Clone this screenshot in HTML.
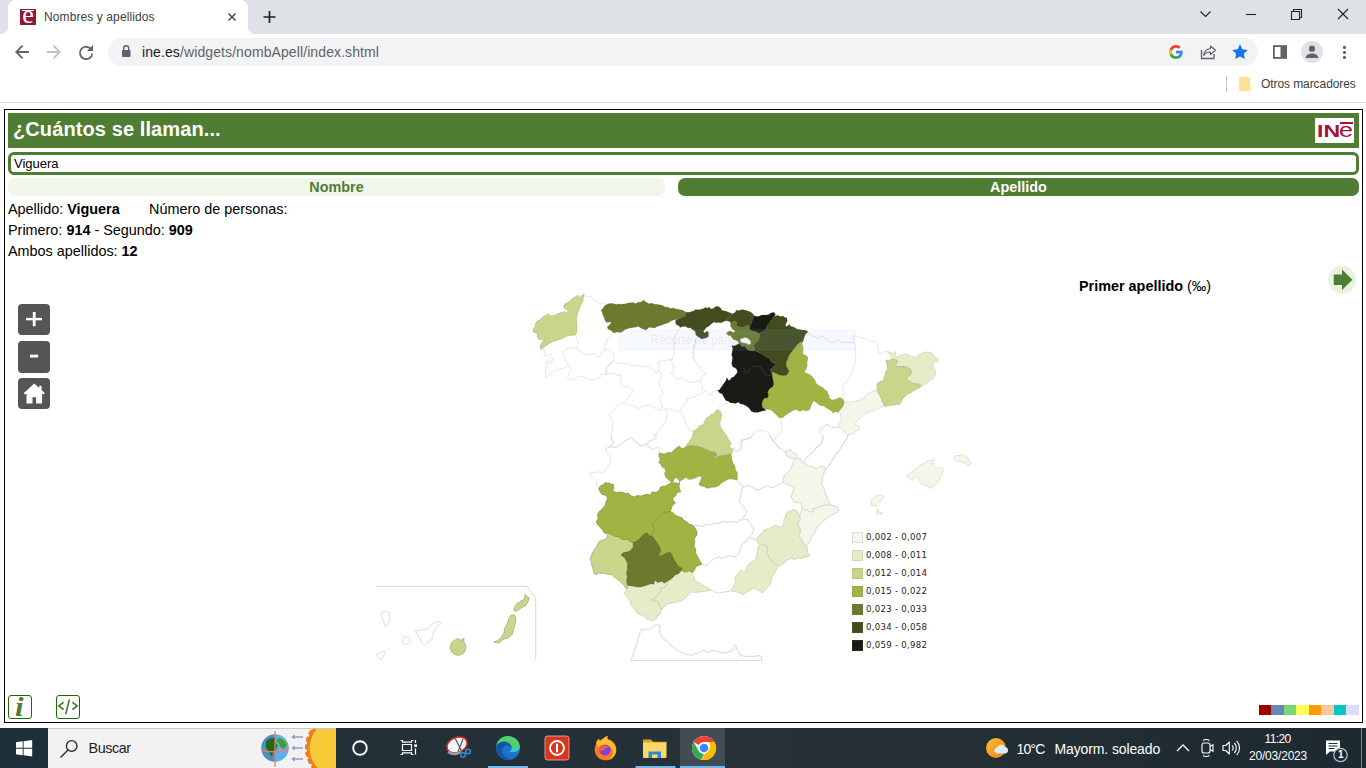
<!DOCTYPE html>
<html lang="es">
<head>
<meta charset="utf-8">
<title>Nombres y apellidos</title>
<style>
*{box-sizing:border-box;margin:0;padding:0}
html,body{width:1366px;height:768px;overflow:hidden;background:#fff}
body{position:relative;font-family:"Liberation Sans",sans-serif;color:#000}
.abs{position:absolute}
/* ---------- chrome ---------- */
#tabbar{left:0;top:0;width:1366px;height:34px;background:#dee1e6}
#tab{left:8px;top:0;width:240px;height:34px;background:#fff;border-radius:8px 8px 0 0}
#tab:before,#tab:after{content:"";position:absolute;bottom:0;width:8px;height:8px}
#tab:before{left:-8px;background:radial-gradient(circle at 0 0,#dee1e6 8px,#fff 8.5px)}
#tab:after{right:-8px;background:radial-gradient(circle at 100% 0,#dee1e6 8px,#fff 8.5px)}
#tabtitle{left:44px;top:10.200px;font-size:12px;color:#3c4043;white-space:nowrap;letter-spacing:.1px}
#toolbar{left:0;top:34px;width:1366px;height:36px;background:#fff}
#omni{left:108px;top:38px;width:1150px;height:28px;border-radius:14px;background:#f1f3f4}
#url{left:142px;top:44px;font-size:14px;color:#5f6368;white-space:nowrap;letter-spacing:.1px}
#url b{font-weight:normal;color:#202124}
#bmbar{left:0;top:70px;width:1366px;height:32px;background:#fff}
#bmline{left:0;top:102px;width:1366px;height:1px;background:#dadce0}
#bmtext{left:1261px;top:77px;font-size:12px;color:#3c4043;white-space:nowrap;letter-spacing:-.08px}
/* ---------- widget ---------- */
#box{left:4px;top:109px;width:1359px;height:614px;border:1px solid #000;background:#fff}
#hdr{left:8px;top:113px;width:1351px;height:35px;background:#4e7d33}
#hdr span{position:absolute;left:5px;top:5px;font-size:20px;letter-spacing:.1px;font-weight:bold;color:#fff;white-space:nowrap}
#inp{left:8px;top:152px;width:1351px;height:23px;border:3px solid #4e7d33;border-radius:6px;background:#fff}
#inp span{position:absolute;left:3px;top:1px;font-size:13px;line-height:15px}
.tabb{top:178px;height:18px;border-radius:7px;font-size:14.4px;font-weight:bold;text-align:center;line-height:18px}
#tb1{left:8px;width:657px;background:#f0f7ea;color:#4e7d33}
#tb2{left:678px;width:681px;background:#4e7d33;color:#fff}
.ln{left:8px;font-size:14.4px;line-height:21px;white-space:nowrap}

.zb{left:18.400px;width:31.200px;height:31.200px;border-radius:4px;background:#555}
#legend{left:852px;top:532px;width:80px;height:120px;font-family:"DejaVu Sans Condensed","DejaVu Sans",sans-serif;font-size:9.500px;letter-spacing:.3px;color:#222}
#legend i{position:absolute;left:0;width:11px;height:11px;border:1px solid rgba(120,120,100,.18)}
#legend span{position:absolute;left:14px;line-height:11px;white-space:nowrap;margin-top:-1.300px}
.bi{top:695px;width:24px;height:24px;border:1px solid #1a6e00;border-radius:3px;color:#4e7d33}
.bi span{position:absolute}
/* ---------- taskbar ---------- */
#task{left:0;top:728px;width:1366px;height:40px;background:linear-gradient(90deg,#1e2f3a 0,#233038 25%,#263138 55%,#212c33 80%,#1e2a31 100%)}
#search{left:48px;top:728px;width:288px;height:40px;background:#f2f2f2;border-top:1px solid #c8c8c8;overflow:hidden}
.tk{color:#fff;font-size:12px;white-space:nowrap}
</style>
</head>
<body>
<!-- CHROME -->
<div id="tabbar" class="abs"></div>
<div id="tab" class="abs"></div>
<div id="tabtitle" class="abs">Nombres y apellidos</div>
<div id="toolbar" class="abs"></div>
<div id="omni" class="abs"></div>
<div id="url" class="abs"><b>ine.es</b>/widgets/nombApell/index.shtml</div>
<div id="bmbar" class="abs"></div>
<div id="bmline" class="abs"></div>
<div id="bmtext" class="abs">Otros marcadores</div>

<!-- favicon -->
<div class="abs" style="left:20px;top:9px;width:16px;height:16px;background:#8c1b33;overflow:hidden">
<div class="abs" style="left:2px;top:.800px;width:12px;height:1.300px;background:#fff"></div>
<div class="abs" style="left:0;top:-9.300px;width:16px;font-family:'Liberation Serif',serif;font-size:26px;line-height:30px;color:#fff;text-align:center">e</div>
</div>
<svg class="abs" style="left:0;top:0" width="1366" height="103" viewBox="0 0 1366 103" fill="none">
<!-- tab close, new tab -->
<path d="M228.5 13.5l7 7m0-7l-7 7" stroke="#3c4043" stroke-width="1.4"/>
<path d="M263.5 17h12m-6-6v12" stroke="#202124" stroke-width="1.7"/>
<!-- window controls -->
<path d="M1200.5 11.5l5 5 5-5" stroke="#202124" stroke-width="1.1"/>
<path d="M1246 14.5h10" stroke="#202124" stroke-width="1.1"/>
<path d="M1291.5 11.5h8v8h-8zM1293.5 11.5v-2h8v8h-2" stroke="#202124" stroke-width="1.1"/>
<path d="M1338 9l10 10m0-10l-10 10" stroke="#202124" stroke-width="1.1"/>
<!-- back -->
<path d="M29 52H16.5m6-6.3L16.3 52l6.2 6.3" stroke="#5f6368" stroke-width="1.8"/>
<!-- forward -->
<path d="M47 52h12.5m-6-6.3L59.700 52l-6.200 6.300" stroke="#bdc1c6" stroke-width="1.8"/>
<!-- reload -->
<path d="M91.300 49.500A6.200 6.200 0 1 0 92.300 53.500" stroke="#5f6368" stroke-width="1.800"/>
<path d="M93 45v6h-6z" fill="#5f6368"/>
<!-- lock -->
<rect x="122" y="50" width="8.500" height="7" rx="1" fill="#5f6368"/>
<path d="M123.800 50v-1.800a2.450 2.450 0 0 1 4.900 0V50" stroke="#5f6368" stroke-width="1.400"/>
<!-- google G -->
<g transform="translate(1169 45)">
<path d="M13.700 7.200c0-.500-.050-1-.130-1.450H7v2.750h3.760a3.200 3.200 0 0 1-1.400 2.100v1.750h2.260c1.320-1.220 2.080-3.010 2.080-5.150z" fill="#4285f4"/>
<path d="M7 14c1.890 0 3.470-.630 4.630-1.700l-2.260-1.750c-.630.420-1.430.670-2.370.670-1.820 0-3.370-1.230-3.920-2.890H.750v1.810A7 7 0 0 0 7 14z" fill="#34a853"/>
<path d="M3.080 8.330A4.200 4.200 0 0 1 2.860 7c0-.460.080-.910.220-1.330V3.860H.750A7 7 0 0 0 0 7c0 1.130.270 2.200.750 3.140l2.330-1.810z" fill="#fbbc05"/>
<path d="M7 2.780c1.030 0 1.950.350 2.680 1.050l2-2C10.460.690 8.890 0 7 0A7 7 0 0 0 .750 3.860l2.330 1.810C3.630 4.010 5.180 2.780 7 2.780z" fill="#ea4335"/>
</g>
<!-- share -->
<path d="M1201.500 50v8.500h12.500V54" stroke="#5f6368" stroke-width="1.300"/>
<path d="M1210.500 46l5 4.300-5 4.300v-2.600c-3.500 0-5.500 1.200-6.700 3.500.3-3.800 2.400-6.500 6.700-7z" stroke="#5f6368" stroke-width="1.200" stroke-linejoin="round"/>
<!-- star -->
<path d="M1240 44.300l2.350 4.950 5.400.700-3.950 3.750 1 5.400-4.800-2.650-4.800 2.650 1-5.400-3.950-3.750 5.400-.700z" fill="#1a73e8"/>
<!-- side panel -->
<rect x="1273.900" y="46.100" width="12.200" height="11.800" stroke="#5f6368" stroke-width="1.800"/>
<rect x="1280.500" y="46" width="6" height="12" fill="#5f6368"/>
<!-- avatar -->
<circle cx="1312" cy="52" r="11" fill="#dee1e6"/>
<circle cx="1312" cy="48.700" r="3.100" fill="#5f6368"/>
<path d="M1305.800 57.500c0-2.700 4.100-4 6.200-4s6.200 1.300 6.200 4v.5h-12.400z" fill="#5f6368"/>
<!-- menu -->
<circle cx="1344.500" cy="47.400" r="1.600" fill="#5f6368"/><circle cx="1344.500" cy="52.400" r="1.600" fill="#5f6368"/><circle cx="1344.500" cy="57.400" r="1.600" fill="#5f6368"/>
<!-- bookmarks -->
<path d="M1226.500 76v16" stroke="#c4c7cc" stroke-width="1"/>
<path d="M1239 78.200a1.200 1.200 0 0 1 1.200-1.200h8.600a1.200 1.200 0 0 1 1.200 1.200V86h1v5h-10.800a1.200 1.200 0 0 1-1.200-1.200z" fill="#fde293"/>
<rect x="1248.700" y="86.500" width="2" height="4" rx=".8" fill="#fff" stroke="#f5d060" stroke-width=".6"/>
</svg>
<!-- WIDGET -->
<div id="box" class="abs"></div>
<div id="hdr" class="abs"><span>¿Cuántos se llaman...</span></div>
<div id="inp" class="abs"><span>Viguera</span></div>
<div id="tb1" class="abs tabb">Nombre</div>
<div id="tb2" class="abs tabb">Apellido</div>
<div class="abs ln" style="top:199px">Apellido: <b>Viguera</b></div>
<div class="abs ln" style="top:199px;left:149px">Número de personas:</div>
<div class="abs ln" style="top:220px">Primero: <b>914</b> - Segundo: <b>909</b></div>
<div class="abs ln" style="top:241px">Ambos apellidos: <b>12</b></div>

<!-- INE logo -->
<div class="abs" style="left:1315px;top:118px;width:39px;height:25px;background:#fff"></div>
<div class="abs" style="left:1317px;top:122.600px;font-size:17px;line-height:17px;font-weight:bold;color:#a3123a;white-space:nowrap;transform:scaleX(1.36);transform-origin:0 0">IN</div>
<div class="abs" style="left:1339px;top:119px;font-size:21px;line-height:21px;color:#a3123a;white-space:nowrap;transform:scaleX(1.2);transform-origin:0 0">e</div>
<div class="abs" style="left:1339.500px;top:122.300px;width:13px;height:1.500px;background:#a3123a"></div>
<!-- map title + arrow -->
<div class="abs" style="left:1079px;top:278px;font-size:14.400px;line-height:16px;white-space:nowrap"><b>Primer apellido </b>(‰)</div>
<svg class="abs" style="left:1326px;top:264px" width="32" height="32" viewBox="0 0 32 32"><circle cx="16" cy="15.800" r="14" fill="#e9f2e1"/><path d="M7.700 10.500h8.300V5.500l10.400 10.300L16 26v-5H7.700z" fill="#4e7d33"/></svg>
<!-- zoom buttons -->
<div class="abs zb" style="top:304.300px"></div>
<div class="abs zb" style="top:341.400px"></div>
<div class="abs zb" style="top:378.300px"></div>
<svg class="abs" style="left:18px;top:304px" width="33" height="107" viewBox="0 0 33 107" fill="#fff">
<rect x="8" y="13.900" width="16" height="2.400"/><rect x="14.800" y="8" width="2.800" height="14.200"/>
<rect x="12" y="50.700" width="8.200" height="2.800"/>
<path d="M16.200 79.600L5.600 89.200l1.300 1.400 1.600-1.300v10.300h6v-6.300h3.600v6.300h6V89.200l1.600 1.400 1.300-1.400-3.400-3.100v-4.400h-2.400v2.200z"/>
</svg>
<!-- legend -->
<div id="legend" class="abs">
<i style="top:0;background:#f4f6e9"></i><span style="top:0">0,002 - 0,007</span>
<i style="top:18px;background:#e6ecc8"></i><span style="top:18px">0,008 - 0,011</span>
<i style="top:36px;background:#c8d68c"></i><span style="top:36px">0,012 - 0,014</span>
<i style="top:54px;background:#a0b444"></i><span style="top:54px">0,015 - 0,022</span>
<i style="top:72px;background:#6b7a2c"></i><span style="top:72px">0,023 - 0,033</span>
<i style="top:90px;background:#434c1d"></i><span style="top:90px">0,034 - 0,058</span>
<i style="top:108px;background:#181c14"></i><span style="top:108px">0,059 - 0,982</span>
</div>
<!-- bottom icons -->
<div class="abs bi" style="left:8px"><span style="font-family:'Liberation Serif',serif;font-style:italic;font-weight:bold;font-size:27px;left:6.200px;top:-3.200px;line-height:28px;transform:scaleX(1.15);transform-origin:0 0">i</span></div>
<div class="abs bi" style="left:56px"><svg class="abs" style="left:0;top:0" width="22" height="22" viewBox="0 0 22 22" fill="none" stroke="#4e7d33" stroke-width="1.700"><path d="M6.600 6.300L1.800 9.900l4.800 3.600M15.400 6.300l4.800 3.600-4.800 3.600M12.400 3.400L8.700 18.300"/></svg></div>
<!-- palette -->
<div class="abs" style="left:1259px;top:705px;width:100px;height:10px;background:linear-gradient(90deg,#9c0000 0 12.500%,#6b85b5 12.500% 25%,#78d878 25% 37.500%,#ffff5a 37.500% 50%,#ff9900 50% 62.500%,#ffc896 62.500% 75%,#00c8c3 75% 87.500%,#dcdcfa 87.500% 100%)"></div>
<!-- MAP -->
<!--MAPSVG-->
<svg id="map" class="abs" style="left:0;top:0" width="1366" height="728" viewBox="0 0 1366 728" fill="none" stroke-linejoin="round">
<g stroke="#d4d4d4" stroke-width=".6">
<path d="M584.2 294.1L586.8 296.7L590.3 296.1L591.6 298.1L593.8 299.1L596 300.5L597.4 302.6L599.1 304.3L601.8 303.6L604.4 304.3L607.3 304.3"/>
<path d="M575.1 334.8L576.4 336.6L576.3 338.9L578 342.4L578.3 345.4L577.4 348.3L578.7 350.6L581 351.8L583.4 353.2L585.6 354.7L588 354.6L590.3 355.3L592.4 353.7L595 353.6L597.1 355.7L599.7 357.1L600.8 355L602.1 353L604.4 350.1L604.5 347.4L605 344.8L606.5 342.6L607.3 340.1L608.2 337.9L610.3 336.6L612.6 333.6"/>
<path d="M541.1 349.5L543.1 350.2L545.2 350.6L544.6 353.1L543.4 355.3L547 355.3L549.2 354.2L551.6 354.2L550.2 356.8L548.1 358.8L547.1 361.2L545.2 362.9L547.5 362.7L549.3 361.2L551.7 359.9L554 358.3L552.6 360.2L551.6 362.4L549.6 363.9L547.6 365.4L545.8 367.1"/>
<path d="M577.4 348.3L574.5 347.8L571.6 348.3L569.2 348.6L566.9 349.2L564.8 350.3L562.8 351.8L563.4 354.2L564 356.5L564.6 358.9L565.7 361.2L568.1 362.9L568.3 365.9"/>
<path d="M604.4 350.1L606.8 350.1L609.1 350.6L611.1 351.4L612.6 353L613.9 355.5L614.4 358.3L613.2 360.2L612.6 362.4L611.1 363.9L609.1 364.7L607.7 367.1L606.2 369.4L606 371.9L607.3 374.1"/>
<path d="M680 328.4L678.6 330.2L677.1 331.9L676.6 334L675.3 335.7L674.7 337.7L673.7 339.7L674.7 341.9L674 343.9L673.6 346L673.5 349L674.7 351.8L673.8 354.1L673.2 356.5L672.4 358.8L670.2 359.8L667.7 360L665.4 360.6L662.9 360L660.7 361.2L659.6 363L658.3 364.7"/>
<path d="M672.4 358.8L670 360"/>
<path d="M695.2 360L696.2 362.2L696.4 364.7L699.9 366.4L700.6 368.8L702.3 370.5L703.7 372.3L705.8 372.9L704.6 375.2L702.5 376L701.1 377.6L700.5 379.6L700.5 381.7L700.9 384L702.3 385.8L702.2 388L703.4 389.9L706 391.3L708.1 393.4L711.1 395.2L712.2 393.1L714 391.6L717.5 390.2"/>
<path d="M680 377L682.2 378.5L684.7 379.3L687 381.7L689.3 382.4L691.7 382.3L694.2 382.3L696.4 381.1L698.5 381.1L700.5 381.7"/>
<path d="M703.4 392.8L700.8 393.4L698.8 395.2L696.7 395.3L695.1 397L692.9 396.9L690.9 397.5L689.1 398.4L687 398.7L687 402.2L685 402.9L683.5 404.5L682.5 406.4L681.2 408.1L680 411.6"/>
<path d="M680 412.7L681.9 415L683.5 417.4L684.5 419.3L685.1 421.3L685.9 423.3L686.7 425.8L688.2 428L688.8 430.1L690.5 431.5L693.5 430.3"/>
<path d="M717.5 409.2L719.9 406.9L721.6 405.1L724 404.3L725.9 403.3L728.1 403.1"/>
<path d="M779.6 418L780.8 421L781.3 423.3L782 425.6L782 428L781.4 430.3L779.6 433.8L777.3 436.2L775.9 437.8L774.9 439.7L772.6 440.3"/>
<path d="M741.5 450L742 447.2L741.5 444.4L742.1 440.9L745.6 439.7L747.4 438.8L749.2 437.9L750.8 436.3L752.7 435L755 432.1L757.2 430.7L759.7 430.9L763.2 430.3L766.7 431.5L769.1 433.8L770.8 437.4L772.6 440.3L774.9 443.2L776.7 444.5L777.3 446.7L779.6 449.1"/>
<path d="M840 425.6L837.1 428L833.6 426.8L830 425.1L826.5 424.5L824.2 427.4L821.8 427.9L820.1 429.7L819.5 432.7L820.9 434.3L821.8 436.2L822.2 438.5L822.4 440.9L820.7 444.4L818.3 447.3L814.8 448.5"/>
<path d="M854 335.5L852.8 338.4L853.8 340.6L854 343.1L855.8 346.6L855.5 349L854.6 351.3L855.5 353.6L855.8 356L855.7 359L855.2 361.9L854 364.7L854 367.7L852.8 369.9L852.2 372.4L850.5 376L848.7 379.5L846.8 381.1L845.2 383L843.3 384.4L842.3 386.5L843.4 390L845.2 392.9L843.4 395.9L842.9 398.2L844 401.7"/>
<path d="M854 335.5L857.5 336.1L859.6 337.7L862.2 337.9L864.7 338L866.9 339L868.7 340.1L870.4 341.4L872.8 341.3L875.1 341.4L877.4 344.3L877.7 346.6L878 349L878.6 352.5L881 353.7L884.5 351.9L887.4 351.6"/>
<path d="M807.8 331.9L809.1 333.7L811.1 334.9L812.5 336.6L814.6 336.3L816.4 337.5L818.4 337.7L821.9 336L824.2 337.5L826.6 338.9L828 341.3L830.5 342.5L834.1 342L837.6 340.2L839.5 341.2L841.1 342.5L843.5 342.9L845.8 342L848.1 342.5L850.5 342.5L853.4 342.5"/>
<path d="M848.1 435.1L847.5 437.1L846.4 438.8L845.2 440.4L843.8 442.2L842.5 444.1L841.7 446.3L840.3 448.2L839.1 450.3L837.6 452.1L835.9 454.5L834.1 456.8L832.9 459.3L831.1 461.5L829.7 463.9L828.2 466.2L826.2 468.2L825.3 470.9L823.7 473.1L822.9 475.6L821.8 477.7L821.2 480"/>
<path d="M838.2 426.9L835.2 427.5L831.7 428.1L828.8 426.3L826.4 424.6L824.5 425.6L823.5 427.5L820 429.3"/>
<path d="M545.6 367L545.7 369.2L545.4 371.5L545.2 373.7L545.8 376L546 378.2L547.3 376.6L549 375.4L550.5 374.1L552.4 371.7L555.2 370.5L557.6 369.8L559.9 368.8L562.6 368.8L565.1 367.6L568.1 365.9"/>
<path d="M568.1 365.9L570.4 367.7L571.6 370.5L569.2 373.5L567.5 376.4L569.2 379.9L572.7 379.9L575.3 378.8L577.4 377L579.7 376.6L582.1 376.4L584.1 377L586 377.6L587.4 379.3L590 379.9L592.7 379.9L595.2 379.6L597.4 378.2L600.9 376.4L601.5 373.5L604 374.4L606.7 374.1L609.6 373.3L612.6 373.5L615.1 373.9L617.3 375.2L620.8 374.7L620.8 376.8L621.4 378.8L621 381.1L620.2 383.4L621.1 385.4L622.6 387L624.7 387.2L626.7 386.4L628.9 386.9L630.8 388.1L632.5 390.5L631.8 392.8L630.2 394.6L629.3 396.8L627.8 398.7L625.7 400.7L623.7 402.8L621.6 403.4L619.6 404.5L616.7 406.3L615 408.2L613.8 410.4L612.2 412.1L610.8 413.9L608.5 414.5L609.8 416.5L610.8 418.6L612.6 422.1L612.2 424.4L612 426.8L612.6 429.1L612.6 431.5L611.3 433.7L611.4 436.2L611.4 438.6L612 440.9L613.8 443.2L611.7 444.4L610.8 446.7L607.3 447.9L605 450"/>
<path d="M606.7 374.1L606.3 372L605.6 370L607.3 368.6L607.9 366.4L609.5 364.7L610.8 362.9L613.8 361.2L614.4 360"/>
<path d="M613.8 361.8L615.7 362.6L617.7 362.9L619.6 363.5L621.6 362.9L623.7 364.1L625.8 363.9L627.8 363.5L629.9 365.1L632.5 365.3L634.9 364.8L637.2 365.9L639.6 365.9L641.8 366.9L644.3 366.3L646.6 367L650.1 366.4L651.9 367.9L653.6 369.4L654.6 371.6L656.6 372.9L658.3 370.5"/>
<path d="M658.3 360L658.1 362.4L658.9 364.7L659.2 367.7L658.3 370.5L660 372.4L662.4 373.5L661.8 375.7L660.7 377.6L660.2 379.7L659.4 381.6L658.3 383.4L659.5 385.7L660.7 388.1L662.1 389.6L662.2 391.9L663.6 393.4L660.1 395.2L660.3 398.1L660.7 401L661.5 402.9L661.9 404.8L661.8 406.9"/>
<path d="M670 360L671.7 361.4L672.4 363.5L673.3 365.8L673.6 368.2L672.8 370.2L671.9 372.1L671.2 374.1L673.4 374.6L674.7 376.4L676.3 378.3L678.2 379.9L680 378.8"/>
<path d="M623.7 403.1L625.6 404.5L628.2 403.9L630.2 405.1L632 406.2L634.2 406L636 406.9L637.8 408L639.6 409.2L641.9 406.3L644.4 406.7L646.5 404.9L648.9 405.1L651.1 405.6L653 406.7L654.8 408.1L656.7 408.9L658.6 410L660.7 410.4L661.8 406.9L664.1 408.1L666.5 409.2L669.5 408.9L672.4 409.2L674.8 410.4L677.1 411.6L680 410.4"/>
<path d="M666.5 409.2L666.6 411.2L666.8 413.2L667.7 415.1L666.3 416.8L666.7 419.1L665.9 421L664.2 423.2L663 425.6L661.2 427.7L658.9 429.2L658.2 431.7L656.6 433.8L653.6 435L656.6 436.2L655.6 438.4L653.6 439.7L651.1 439.9L648.9 440.9L647.3 442.6L647.2 445L650.1 447.3L651.5 449L653.6 449.7"/>
<path d="M610.8 446.7L612.8 447.3L614.9 447.3L617.5 446.7L619.6 445L621.4 443.9L623 442.6L624.3 440.9L626.8 440.1L629.3 439L631.4 437.4L633.2 438.7L634.7 440.3L636 442.1L638 443L639.6 444.3L640.7 446.2L642.6 445.2L644.2 443.8L647.2 445"/>
<path d="M598.7 488.9L597.5 487.2L596.9 483.6L596.3 481.5L594.6 480.1L593.5 477.8L591.6 476L590.8 473.7L589.3 471.9L592.2 472.4L595.2 472.5L597.8 472L600.4 471.9L602.8 472.4L605.1 471.9L606.3 469L607.2 467.1L608.6 465.5L610.1 463.4L610.4 460.8L610.8 458.5L610.4 456.1L608.5 454.5L606.9 452.6L605.7 449.1L608.1 446.7L610.2 446.9L612.2 446.7L614.2 447.4L616.3 447.3L618.2 446.4L619.8 445L621.6 443.8L623.3 442.6L625.2 441L627.4 439.7L629.4 438.4L631.5 437.3L632.8 439.3L635 440.3L636 442.4L637.9 443.8L640.9 446.1L643.1 445.6L644.4 443.8L647.3 445.5L649 446.7L650.8 447.9L653.8 449.7L655.1 447.9L657.3 447.3L659.6 446.7L659.6 448.9L659.9 451L659.4 453.2"/>
<path d="M612.2 435L611.6 438.5L612.3 440.6L613.3 442.6L612.3 445L610.4 446.7"/>
<path d="M657.3 435L655.9 436.9L654.9 439.1L652.8 440.3L650.3 440.3L648.5 442L647.9 444.4"/>
<path d="M701.8 564.3L705.3 566L707.1 564.8L708.9 563.7L711.2 560.8L713.3 559.2L715.9 558.4L719.4 556.9L721.2 558.4"/>
<path d="M710.8 589.7L712.9 590.7L714.9 592L717.2 592.7L719.6 593.2L721.9 592.5L724.2 592L726.5 591.7L728.9 591.4L730.7 590.9"/>
<path d="M848.9 435L847.1 437L846.6 439.7L844.5 441.8L843.1 444.4L841.9 446.3L841.2 448.5L839.6 450.2L837.9 452.6L836 454.9L834.7 456.6L833.3 458.2L832.5 460.2L831.2 461.9L830 463.6L829 465.5L827.6 467.6L825.5 469"/>
<path d="M823.2 435L823.7 437.5L822.6 439.7L822.2 442.2L820.8 444.4L818.4 445.8L816.1 447.3L815.4 449.6L813.8 451.4L811.6 452.7L810.3 454.9L808.7 456.3L806.7 457.3L804.4 459.6L805 462.5"/>
<path d="M770.4 435L770.8 437.5L772.2 439.7L773.5 442.1L775.7 443.8L777.3 445.1L778.6 446.7L780.1 448.3L782.1 449.1L783.5 450.8L785.6 451.4"/>
<path d="M731.7 447.9L733.9 448.8L735.2 450.8L737.3 450.7L739.3 450.2L739.9 447.5L741.7 445.5L740.8 443L741.1 440.3L743.4 439.7L745.8 439.1L748.1 438.4L750.5 438.5L751.5 436.7L752.8 435"/>
<path d="M737.6 480.1L739.3 483.6L741.5 484.9L743.4 486.6L745.4 486.5L747.3 485.4L749.3 485.4L751.5 487.1L754 488.3L756.2 489.6L758.7 490.1L760.5 488.7L762.7 487.9L764.5 486.6L766.3 485.4L769.2 487.2L771.6 487.3L773.9 487.7L776 485.8L778.6 484.8L781.2 483.7L783.3 481.9"/>
<path d="M743.4 486.6L741.9 488.7L741.7 491.3L740.7 493.5L740.5 496L740 498.9L739.3 501.8L740.5 503.8L742.3 505.3L743.7 506.8L744.8 508.6L746.4 510L746.5 512.4L745.8 514.7L744 516.1L743.4 518.2"/>
<path d="M693.9 525L695.9 525.5L697.9 525.7L699.9 526.1L701.8 526.5L703.9 526.2L706 525L708.1 524.2L710.7 525L712.9 524L715 523.1L717.5 523.2L720 522.9L723.5 521.2L726.4 522.2L729.4 521.7L732.4 521.5L735.2 522.3L737.5 522L739 519.9L741.5 520L743.4 518.8L745.4 519.5L747.5 519.4L748.3 521.4L749.9 522.9L751.6 525"/>
<path d="M751.6 525L752.3 527.4L753.4 529.7L752.7 532.1L751.6 534.4L750.1 535.9L749.3 537.9L751.8 538L753.9 539.2L756.3 539.7"/>
<path d="M749.3 537.9L747.6 540L745.2 541.4L742.9 542.6L741.7 544.9L740.8 547.4L739.3 549.6L739.3 552.1L738.2 554.3L735.2 556.6L731.7 556.6L728.2 555.5L724.7 557.2L721.2 558.4"/>
<path d="M641 629.5L644 629.8L646.9 629L649.7 629.2L652.2 627.8L655.1 625.4L657.4 624.3L658.6 625.4L661 625.4L659.2 626.6L660.1 628.6L659.8 630.7L659.9 632.9L661 634.8L661.8 636.8L663.3 638.3L664.8 640L666.8 641.3L668.5 643.1L670.3 644.8L671.7 646.4L673.9 647L675 648.9L677.3 650.5L679.7 651.8L682.2 652.3L684.4 653.6L686.2 654.6L688.5 654.2L690.3 655.3L692.8 655L694.9 653.6L697.4 653.8L699.6 652.4L701.7 650.9L704.3 650.6L706.4 651.3L707.8 653L710 651.4L712.5 650.6L715 650.6L717.2 651.8L719.2 651.8L721 653.1L723.1 653L726.1 652.9L728.9 651.8L731.6 650.9L733.6 648.9L733.8 646.5L735.4 644.8L736.4 646.7L736.6 648.9L737.7 650.7L738.9 652.4L739.8 654.4L741.8 655.3L744 656.4L746.5 656.5L749.5 656.2L752.4 656.5L754.8 656.4L757.1 655.9L759.4 655.8L761.5 656.7"/>
<path d="M695.8 339.2L695.3 341.5L695.2 343.9L693.8 346L694.1 348.4L693.2 350.7L692.7 353L693.9 355.2L693.1 357.8L694.1 360L695.2 360"/>
<path d="M701.8 564.3L705.3 566L707.1 564.8L708.9 563.7L711.2 560.8L713.3 559.2L715.9 558.4L719.4 556.9L721.2 558.4"/>
<path d="M710.8 589.7L712.9 590.7L714.9 592L717.2 592.7L719.6 593.2L721.9 592.5L724.2 592L726.5 591.7L728.9 591.4L730.7 590.9"/>
<path d="M848.9 435L847.1 437L846.6 439.7L844.5 441.8L843.1 444.4L841.9 446.3L841.2 448.5L839.6 450.2L837.9 452.6L836 454.9L834.7 456.6L833.3 458.2L832.5 460.2L831.2 461.9L830 463.6L829 465.5L827.6 467.6L825.5 469"/>
<path d="M823.2 435L823.7 437.5L822.6 439.7L822.2 442.2L820.8 444.4L818.4 445.8L816.1 447.3L815.4 449.6L813.8 451.4L811.6 452.7L810.3 454.9L808.7 456.3L806.7 457.3L804.4 459.6L805 462.5"/>
<path d="M770.4 435L770.8 437.5L772.2 439.7L773.5 442.1L775.7 443.8L777.3 445.1L778.6 446.7L780.1 448.3L782.1 449.1L783.5 450.8L785.6 451.4"/>
<path d="M731.7 447.9L733.9 448.8L735.2 450.8L737.3 450.7L739.3 450.2L739.9 447.5L741.7 445.5L740.8 443L741.1 440.3L743.4 439.7L745.8 439.1L748.1 438.4L750.5 438.5L751.5 436.7L752.8 435"/>
<path d="M737.6 480.1L739.3 483.6L741.5 484.9L743.4 486.6L745.4 486.5L747.3 485.4L749.3 485.4L751.5 487.1L754 488.3L756.2 489.6L758.7 490.1L760.5 488.7L762.7 487.9L764.5 486.6L766.3 485.4L769.2 487.2L771.6 487.3L773.9 487.7L776 485.8L778.6 484.8L781.2 483.7L783.3 481.9"/>
<path d="M743.4 486.6L741.9 488.7L741.7 491.3L740.7 493.5L740.5 496L740 498.9L739.3 501.8L740.5 503.8L742.3 505.3L743.7 506.8L744.8 508.6L746.4 510L746.5 512.4L745.8 514.7L744 516.1L743.4 518.2"/>
<path d="M693.9 525L695.9 525.5L697.9 525.7L699.9 526.1L701.8 526.5L703.9 526.2L706 525L708.1 524.2L710.7 525L712.9 524L715 523.1L717.5 523.2L720 522.9L723.5 521.2L726.4 522.2L729.4 521.7L732.4 521.5L735.2 522.3L737.5 522L739 519.9L741.5 520L743.4 518.8L745.4 519.5L747.5 519.4L748.3 521.4L749.9 522.9L751.6 525"/>
<path d="M751.6 525L752.3 527.4L753.4 529.7L752.7 532.1L751.6 534.4L750.1 535.9L749.3 537.9L751.8 538L753.9 539.2L756.3 539.7"/>
<path d="M749.3 537.9L747.6 540L745.2 541.4L742.9 542.6L741.7 544.9L740.8 547.4L739.3 549.6L739.3 552.1L738.2 554.3L735.2 556.6L731.7 556.6L728.2 555.5L724.7 557.2L721.2 558.4"/>
<path d="M641 629.5L644 629.8L646.9 629L649.7 629.2L652.2 627.8L655.1 625.4L657.4 624.3L658.6 625.4L661 625.4L659.2 626.6L660.1 628.6L659.8 630.7L659.9 632.9L661 634.8L661.8 636.8L663.3 638.3L664.8 640L666.8 641.3L668.5 643.1L670.3 644.8L671.7 646.4L673.9 647L675 648.9L677.3 650.5L679.7 651.8L682.2 652.3L684.4 653.6L686.2 654.6L688.5 654.2L690.3 655.3L692.8 655L694.9 653.6L697.4 653.8L699.6 652.4L701.7 650.9L704.3 650.6L706.4 651.3L707.8 653L710 651.4L712.5 650.6L715 650.6L717.2 651.8L719.2 651.8L721 653.1L723.1 653L726.1 652.9L728.9 651.8L731.6 650.9L733.6 648.9L733.8 646.5L735.4 644.8L736.4 646.7L736.6 648.9L737.7 650.7L738.9 652.4L739.8 654.4L741.8 655.3L744 656.4L746.5 656.5L749.5 656.2L752.4 656.5L754.8 656.4L757.1 655.9L759.4 655.8L761.5 656.7"/>
<path d="M695.8 339.2L695.3 341.5L695.2 343.9L693.8 346L694.1 348.4L693.2 350.7L692.7 353L693.9 355.2L693.1 357.8L694.1 360L695.2 360"/>
<path d="M761.5 656.7L761.5 660.6L631.1 660.6L641 629.5"/>
<path d="M376.8 586.4L526.9 586.4L535.7 597.8L535.7 659.3"/>
<path d="M761.5 656.7L761.5 660.6L631.1 660.6L641 629.5"/>
<path d="M376.8 586.4L526.9 586.4L535.7 597.8L535.7 659.3"/>
</g>
<g fill="#fff" stroke="#d4d4d4" stroke-width=".6">
<path d="M415.6 630.8L418.5 630.2L421.5 630L424.4 629.1L427.3 628.6L429.6 626.9L431.7 624.9L433.3 623.2L435.4 622.4L438 622L440.5 621.5L441.7 623.4L439.4 624.5L437.6 626.4L435.9 628L434.7 630L433.3 632L433.2 634.4L432.9 636.8L431.7 638.8L429.8 640.3L428.8 642.5L426.4 643.7L424.4 645.4L422.2 643.2L421 641L420 638.8L418.6 636.8L417.8 634.4L416.5 632.7Z"/>
<path d="M381.2 613.2L383 612.2L384.9 611.3L388.6 612.2L389.4 614.5L390 616.9L389.3 619L389.3 621.2L387.8 623.6L387.1 626.4L386.1 627.1L384.6 625.1L384.2 622.7L383.5 620L382 617.6L381.3 615.5Z"/>
<path d="M410.2 640.6L409.9 642.1L409 643.4L407.7 644.2L406.1 644.5L404.6 644.2L403.2 643.4L402.3 642.1L402 640.6L402.3 639.1L403.2 637.8L404.6 636.9L406.1 636.6L407.7 636.9L409 637.8L409.9 639.1Z"/>
<path d="M376.1 654.9L378.1 653.6L380.5 653.5L383.4 650.8L384.9 652.7L383.4 656.4L381.7 659.3L378.3 657.8Z"/>
<path d="M415.6 630.8L418.5 630.2L421.5 630L424.4 629.1L427.3 628.6L429.6 626.9L431.7 624.9L433.3 623.2L435.4 622.4L438 622L440.5 621.5L441.7 623.4L439.4 624.5L437.6 626.4L435.9 628L434.7 630L433.3 632L433.2 634.4L432.9 636.8L431.7 638.8L429.8 640.3L428.8 642.5L426.4 643.7L424.4 645.4L422.2 643.2L421 641L420 638.8L418.6 636.8L417.8 634.4L416.5 632.7Z"/>
<path d="M381.2 613.2L383 612.2L384.9 611.3L388.6 612.2L389.4 614.5L390 616.9L389.3 619L389.3 621.2L387.8 623.6L387.1 626.4L386.1 627.1L384.6 625.1L384.2 622.7L383.5 620L382 617.6L381.3 615.5Z"/>
<path d="M410.2 640.6L409.9 642.1L409 643.4L407.7 644.2L406.1 644.5L404.6 644.2L403.2 643.4L402.3 642.1L402 640.6L402.3 639.1L403.2 637.8L404.6 636.9L406.1 636.6L407.7 636.9L409 637.8L409.9 639.1Z"/>
<path d="M376.1 654.9L378.1 653.6L380.5 653.5L383.4 650.8L384.9 652.7L383.4 656.4L381.7 659.3L378.3 657.8Z"/>
</g>
<g fill="#f4f6e9" stroke="#c6c9b4" stroke-width=".5">
<path d="M844 402.9L846.4 401.7L848.5 401.7L850.5 402.3L852.9 401.8L855.2 401.1L858.7 400.5L862.2 398.8L864.2 397.9L865.1 395.9L866.9 394.1L870.4 392.9L871.6 391.2L874.2 390.7L876.8 391.4L878.6 393.5L880.4 397L881.4 399L882.1 401.1L883.4 402.7L883.9 404.7L885.1 406.4L882.9 406.5L881 407.6L878.5 408.1L876.3 409.3L874.1 410.5L871.6 411.1L869.3 412.2L866.9 412.9L863.4 414.6L861.7 415.9L860.4 417.5L859.2 419.3L857.5 420.5L855.2 423.4L855.2 424.6L858.7 426.3L860.4 427.5L858.7 429.9L856.7 430.7L855.2 432.2L852.8 434.5L851.1 433.4L848.1 435.1L845.2 432.8L842.9 430.4L840.5 428.1L838.2 426.9L838.8 424L840.5 420.5L841.5 418.5L841.1 416.4L839.9 413.4L838.2 412.3L840.5 409.3L842.9 406.4Z"/>
<path d="M906.4 475.4L908.5 474.9L910 473.3L911.8 471.4L914.2 470.7L916.1 468.7L918.3 467.1L920 465.1L922.5 464L925 463.3L926.7 461.4L930.3 460.3L933.4 459.6L934.5 460.3L931.9 461.9L931.4 463.4L934.5 463.4L933.4 465.5L935 467.6L937.1 468.6L939.7 467.1L942.3 468.1L943.3 469.7L942.3 473.3L940.7 476.5L940.3 478.7L938.6 480.1L937.1 483.2L934.5 485.8L931.9 487.9L930.3 488.4L927.7 486.4L924.6 484.8L921.5 484.3L919.9 482.2L919.4 479.6L918.3 477.5L915.7 477L913.1 478.5L912.1 480.6L911 478.5L908.4 477.5Z"/>
<path d="M953.8 457.2L955.3 455.6L959 455.4L962.6 455.1L963.6 454.6L966.2 456.7L968 457.9L968.9 459.8L970.6 462.9L969.9 465.5L966.8 464.5L963.6 462.4L960 460.8L956.4 461.4L954.3 460.3Z"/>
<path d="M870.4 500.4L872.5 498.9L874.6 496.8L877.7 495.4L880.8 495L883.4 496.2L884 498.3L881.4 500.9L878.8 503L877.2 504.6L876.1 506.5L873.5 505.6L870.4 505.4L871.5 503Z"/>
<path d="M876.1 514.5L876.7 511.4L877.7 508.8L878.8 511.9L880.8 512.9L882.7 513.4L881.4 514.5L879.3 513.4L877.2 514.2Z"/>
<path d="M793.3 460.2L796.8 458.4L798.8 459L800.9 459L801.5 461.4L803.2 463.1L806.7 464.3L808.1 466L810.3 466.6L813.8 467.2L816.7 469L818.3 467.7L819.6 466.1L823.2 466.6L825.5 469L824.7 471.4L823.7 473.7L823.1 476.2L822 478.4L822.4 480.8L821.4 483.1L822.4 485.4L823.2 487.7L824.3 489.5L824.8 491.5L824.9 493.6L826 495.4L826.8 497.4L827.3 499.5L828.5 501.5L829.6 503.6L830.8 505.3L828.1 504.9L825.5 505.3L823 505.5L820.8 506.5L818.2 506.7L816.1 508.3L812.6 508.8L813.8 511.2L811.4 512.4L809.2 511.8L807.9 510L804.4 510L802.1 508.8L802.1 505.3L800.9 503L797.4 502.4L794.4 502.4L792.7 499.5L790.9 497.1L792.1 493.6L793.8 490.1L793.8 486.6L790.3 485.4L788 484.7L785.6 484.2L783.3 481.9L783.3 478.4L785.1 474.9L786.7 473.5L788 471.9L790.3 470.2L791.5 466.6L793.3 463.1Z"/>
<path d="M785.6 452L788 450.8L790.3 449.7L792.7 452.6L796.2 454.3L797.4 456.1L795 457.9L792.6 458L790.3 457.9L787.4 456.7L786.2 454.3Z"/>
<path d="M797.4 525L799.7 527.9L800.3 531.4L799.5 533.2L798.5 535L799.7 537.3L801.2 538.8L802.1 540.8L803 542.7L804.4 544.3L806.7 546.7L808.5 543.8L809.7 542.2L810.3 540.2L811.4 536.7L813.8 533.8L815.5 530.9L816.1 527.9L818.5 526.2L819 525L820.8 523.5L823.2 521.1L826.1 518.8L829 516.4L832.5 514.7L836 512.9L839 510.6L837.8 507.7L834.9 505.9L832.9 505.4L830.8 505.3L828.1 504.9L825.5 505.3L823 505.5L820.8 506.5L818.2 506.8L816.1 508.2L812.6 508.8L813.8 511.2L811.4 512.3L809.3 511.7L807.9 510L804.4 510L802.1 508.8L800.9 512.3L799.7 515.9L800.3 519.4L798.5 522.3Z"/>
<path d="M793.3 460.2L796.8 458.4L798.8 459L800.9 459L801.5 461.4L803.2 463.1L806.7 464.3L808.1 466L810.3 466.6L813.8 467.2L816.7 469L818.3 467.7L819.6 466.1L823.2 466.6L825.5 469L824.7 471.4L823.7 473.7L823.1 476.2L822 478.4L822.4 480.8L821.4 483.1L822.4 485.4L823.2 487.7L824.3 489.5L824.8 491.5L824.9 493.6L826 495.4L826.8 497.4L827.3 499.5L828.5 501.5L829.6 503.6L830.8 505.3L828.1 504.9L825.5 505.3L823 505.5L820.8 506.5L818.2 506.7L816.1 508.3L812.6 508.8L813.8 511.2L811.4 512.4L809.2 511.8L807.9 510L804.4 510L802.1 508.8L802.1 505.3L800.9 503L797.4 502.4L794.4 502.4L792.7 499.5L790.9 497.1L792.1 493.6L793.8 490.1L793.8 486.6L790.3 485.4L788 484.7L785.6 484.2L783.3 481.9L783.3 478.4L785.1 474.9L786.7 473.5L788 471.9L790.3 470.2L791.5 466.6L793.3 463.1Z"/>
<path d="M785.6 452L788 450.8L790.3 449.7L792.7 452.6L796.2 454.3L797.4 456.1L795 457.9L792.6 458L790.3 457.9L787.4 456.7L786.2 454.3Z"/>
<path d="M797.4 525L799.7 527.9L800.3 531.4L799.5 533.2L798.5 535L799.7 537.3L801.2 538.8L802.1 540.8L803 542.7L804.4 544.3L806.7 546.7L808.5 543.8L809.7 542.2L810.3 540.2L811.4 536.7L813.8 533.8L815.5 530.9L816.1 527.9L818.5 526.2L819 525L820.8 523.5L823.2 521.1L826.1 518.8L829 516.4L832.5 514.7L836 512.9L839 510.6L837.8 507.7L834.9 505.9L832.9 505.4L830.8 505.3L828.1 504.9L825.5 505.3L823 505.5L820.8 506.5L818.2 506.8L816.1 508.2L812.6 508.8L813.8 511.2L811.4 512.3L809.3 511.7L807.9 510L804.4 510L802.1 508.8L800.9 512.3L799.7 515.9L800.3 519.4L798.5 522.3Z"/>
</g>
<g fill="#e6ecc8" stroke="#c6c9b4" stroke-width=".5">
<path d="M887.4 351.6L890.3 352.3L893.3 353.7L895 351.6L896.2 353.7L895 356L897.4 356.6L900.9 354.9L904.4 353.7L907.9 354.3L910.8 356L913.8 357.4L917.3 356.6L919.6 354.3L923.2 352.7L926.7 351.9L930.2 352.5L933.1 353.7L933.7 356L936 357.8L938.4 359L937.2 361.9L934.3 361.9L932.5 364.2L933.7 367.7L935 369.3L935.5 371.3L935.5 374.8L933.7 377.7L930.8 380.1L927.8 382.4L926.2 383.8L924.3 384.7L921.4 385.9L919.6 384.2L916.1 384.2L913.2 383.6L910.8 381.8L908.5 380.1L906.7 378.9L907.3 377.1L910.3 374.8L911.4 371.8L910.8 369.5L908.5 367.7L905.6 366.6L902.1 366.6L899.1 366.6L896.8 367.2L895.6 364.8L897.4 363.1L896.8 360.1L893.8 359.3L891.5 359.5L891.1 357.4L890.3 355.4L888.6 353.7Z"/>
<path d="M627.4 584.8L629.2 585.4L632.7 586L636.2 586.5L639.7 587.1L642.1 586.5L645.6 585.4L649.1 584.2L651.4 583.6L653.8 584.2L654.4 581.3L656.1 580.1L657.3 582.4L659.6 581.8L662 581.3L664.3 583L667.3 581.3L670.2 579.5L673.1 577.2L674.9 574.8L677.2 574.2L679.6 572.5L681.3 570.1L684.2 571.9L686.7 571.9L688.9 570.7L690.6 571.8L692.5 572.5L692.4 574.7L693.6 576.6L694.8 580.1L696.3 581.6L698.3 582.4L700.3 583.3L701.8 584.8L703.9 586.4L706.5 587.1L710 588.9L710.7 590.1L707.8 590.9L705.4 591L703.1 591.5L700.2 591.9L697.3 592L695.1 592.3L692.9 592L690.8 592.6L688.5 594.4L687.3 596.4L685.5 597.9L683.5 599.1L682 600.8L679 600.8L676.2 602L674.3 602.6L672.2 602.7L670.3 603.2L667.6 603.7L665.6 605.5L662.7 607.9L660.9 611.4L659.2 614.9L656.8 615.5L656.8 618.4L654.5 619.6L651.5 620.8L649.2 619.6L646.3 618.4L644.7 616.3L642.2 615.5L640.1 614.7L638.1 613.7L636.7 612.1L635.1 610.8L634.2 608.4L632.2 606.7L631.3 604.8L629.9 603.2L631 601.4L629.3 599.7L628.2 597.6L626.3 596.2L625.5 594.2L624.2 592.6L626.1 591.2L626.8 588.9L627.5 586.9Z"/>
<path d="M775.1 525L773.5 526.4L771.6 527.3L769.5 528.9L766.9 529.1L763.4 530.9L762.3 533L760.4 534.4L758.1 537.3L756.3 539.7L758.1 542.6L759.9 544.9L762.2 545L764.6 545.4L766.9 545.5L767.5 548.4L767.3 550.5L766.9 552.5L768.6 556.1L769.2 558.2L771 559.6L772.7 562.5L775.7 564.3L778.6 566L782.1 564.3L784.2 563.2L785.6 561.3L787.3 560L789.2 559L792.1 558.4L795 559.6L797.4 557.8L800.9 558.4L804.4 557.2L807.3 556.6L809.7 555.7L807.9 553.1L807.3 550.2L806.7 546.7L804.4 544.3L803 542.7L802.1 540.8L801.2 538.8L799.7 537.3L798.5 535L799.5 533.2L800.3 531.4L799.7 527.9L797.4 525L798.5 522.3L800.3 519.4L799.7 515.9L799.1 514.1L796.8 511.2L793.8 509.4L791.5 510.6L788 511.8L785.6 514.7L785.4 517.3L783.9 519.4L784 522.2L783.3 525L781.5 527.3L778 526.8Z"/>
<path d="M759.9 544.9L762.2 545L764.6 545.4L766.9 545.5L767.5 548.4L767.3 550.5L766.9 552.5L768.6 556.1L769.2 558.2L771 559.6L772.7 562.5L775.7 564.3L778.6 566L777.4 567.7L776.3 569.5L775.4 571.5L773.9 573.1L772.2 576.6L771.3 578.6L771 580.7L769.8 584.2L767.5 587.1L765.1 590.1L763.8 591.7L762.2 593L759.3 590.6L756.3 588.9L753.4 588.3L749.9 590.1L747 592.4L745.1 593.1L743.4 594.2L739.9 593L736.4 591.8L732.9 591.2L730.5 590.6L732.9 587.7L734.1 584.8L735.8 582.4L734.7 578.9L736.4 576L738.8 573.1L740.5 570.1L743.4 571.9L746.4 571.3L746 569.1L747 567.2L748.7 564.3L751.6 561.9L755.2 560.2L756.3 556.6L756.8 554.5L757.5 552.5L757.7 550.5L757.5 548.4L758.7 546.1Z"/>
<path d="M627.4 584.8L629.2 585.4L632.7 586L636.2 586.5L639.7 587.1L642.1 586.5L645.6 585.4L649.1 584.2L651.4 583.6L653.8 584.2L654.4 581.3L656.1 580.1L657.3 582.4L659.6 581.8L662 581.3L664.3 583L667.3 581.3L670.2 579.5L673.1 577.2L674.9 574.8L677.2 574.2L679.6 572.5L681.3 570.1L684.2 571.9L686.7 571.9L688.9 570.7L690.6 571.8L692.5 572.5L692.4 574.7L693.6 576.6L694.8 580.1L696.3 581.6L698.3 582.4L700.3 583.3L701.8 584.8L703.9 586.4L706.5 587.1L710 588.9L710.7 590.1L707.8 590.9L705.4 591L703.1 591.5L700.2 591.9L697.3 592L695.1 592.3L692.9 592L690.8 592.6L688.5 594.4L687.3 596.4L685.5 597.9L683.5 599.1L682 600.8L679 600.8L676.2 602L674.3 602.6L672.2 602.7L670.3 603.2L667.6 603.7L665.6 605.5L662.7 607.9L660.9 611.4L659.2 614.9L656.8 615.5L656.8 618.4L654.5 619.6L651.5 620.8L649.2 619.6L646.3 618.4L644.7 616.3L642.2 615.5L640.1 614.7L638.1 613.7L636.7 612.1L635.1 610.8L634.2 608.4L632.2 606.7L631.3 604.8L629.9 603.2L631 601.4L629.3 599.7L628.2 597.6L626.3 596.2L625.5 594.2L624.2 592.6L626.1 591.2L626.8 588.9L627.5 586.9Z"/>
<path d="M775.1 525L773.5 526.4L771.6 527.3L769.5 528.9L766.9 529.1L763.4 530.9L762.3 533L760.4 534.4L758.1 537.3L756.3 539.7L758.1 542.6L759.9 544.9L762.2 545L764.6 545.4L766.9 545.5L767.5 548.4L767.3 550.5L766.9 552.5L768.6 556.1L769.2 558.2L771 559.6L772.7 562.5L775.7 564.3L778.6 566L782.1 564.3L784.2 563.2L785.6 561.3L787.3 560L789.2 559L792.1 558.4L795 559.6L797.4 557.8L800.9 558.4L804.4 557.2L807.3 556.6L809.7 555.7L807.9 553.1L807.3 550.2L806.7 546.7L804.4 544.3L803 542.7L802.1 540.8L801.2 538.8L799.7 537.3L798.5 535L799.5 533.2L800.3 531.4L799.7 527.9L797.4 525L798.5 522.3L800.3 519.4L799.7 515.9L799.1 514.1L796.8 511.2L793.8 509.4L791.5 510.6L788 511.8L785.6 514.7L785.4 517.3L783.9 519.4L784 522.2L783.3 525L781.5 527.3L778 526.8Z"/>
<path d="M759.9 544.9L762.2 545L764.6 545.4L766.9 545.5L767.5 548.4L767.3 550.5L766.9 552.5L768.6 556.1L769.2 558.2L771 559.6L772.7 562.5L775.7 564.3L778.6 566L777.4 567.7L776.3 569.5L775.4 571.5L773.9 573.1L772.2 576.6L771.3 578.6L771 580.7L769.8 584.2L767.5 587.1L765.1 590.1L763.8 591.7L762.2 593L759.3 590.6L756.3 588.9L753.4 588.3L749.9 590.1L747 592.4L745.1 593.1L743.4 594.2L739.9 593L736.4 591.8L732.9 591.2L730.5 590.6L732.9 587.7L734.1 584.8L735.8 582.4L734.7 578.9L736.4 576L738.8 573.1L740.5 570.1L743.4 571.9L746.4 571.3L746 569.1L747 567.2L748.7 564.3L751.6 561.9L755.2 560.2L756.3 556.6L756.8 554.5L757.5 552.5L757.7 550.5L757.5 548.4L758.7 546.1Z"/>
</g>
<g fill="#c8d68c" stroke="rgba(90,95,60,.4)" stroke-width=".5">
<path d="M584.2 294.1L583.3 297.9L583.2 300.4L582.1 302.6L581.1 304.6L580.4 306.7L579.5 309.1L578.3 311.4L577.1 314.9L577.1 317L576.3 319L577.1 321.3L576.6 323.7L577.3 326.3L576.8 329L577.1 331.9L575.1 334.8L571.6 335.4L568.1 335.6L564.5 337.2L561 338.9L557.5 340.3L554 341.3L550.5 342.7L547.5 344.8L545.2 346.5L542.9 348.3L541.1 349.5L539.9 347.1L541.1 343.6L542.9 340.7L545.2 337.7L542.3 339.5L538.8 339.5L537 336.6L537.6 334.2L534.7 332.5L532.9 331.9L533.5 328.4L535.1 326.6L535.2 324.3L536 322.3L537.6 320.8L540.5 319.6L542.3 317.2L545.2 315.7L547.5 313.7L550.5 315.7L552.9 315.5L555.2 314.9L557.2 313.8L559.3 313.1L562.8 312.2L565.1 311.4L566.9 313.1L568.1 310.2L565.1 309L563.4 307.3L564.5 304.3L567.5 302.6L570.4 300.8L571.6 299.1L573.3 297.9L576.3 296.1L578 295L578.6 297.9L581 296.1Z"/>
<path d="M717.5 409.2L720.4 411.6L722 415.1L721 418.6L720.5 421L719.9 423.3L720.4 426.8L721.6 428.5L722.8 430.3L725.1 433.3L726.9 436.2L728.8 439.7L730.5 442.1L731.1 444.4L729.3 446.7L732.3 449.1L732.9 452.6L731.1 454.4L729 454.4L727 454.9L724.7 455.4L722.3 455.5L720 456.1L717.9 456.9L715.9 457.9L713.1 458.7L711.2 460.8L708.2 462L709.4 460.2L711.6 459.3L713.5 457.9L715.4 456.8L717 455.5L715.9 453.2L713.7 452.1L711.2 452L709.2 451.3L707.5 449.8L705.3 449.7L703.2 447.9L700.6 447.3L698.6 446.4L696.5 446.2L694.4 446.1L692.4 445.6L688.9 446.2L685.4 447.3L686.4 444.4L689.4 442.1L689.9 439.9L691.7 438.5L692.5 436.2L692.9 433.8L693.5 430.3L695.2 430.3L697.6 428L699.9 425.6L703.4 424.5L704.6 421L706.4 418L709.3 416.3L710.7 414.6L712.8 413.9L715.2 411.6Z"/>
<path d="M886.2 360.1L888.9 360.2L891.5 359.5L893.8 359.3L896.8 360.1L897.4 363.1L895.6 364.8L896.8 367.2L899.4 366.4L902.1 366.6L905.6 366.6L908.5 367.7L910.8 369.5L911.4 371.8L910.3 374.8L907.3 377.1L906.7 378.9L908.5 380.7L910.8 381.8L913.2 383.6L915.4 383.5L917.5 384.1L919.6 384.2L921.4 385.9L919.6 387.7L916.1 389.4L912.6 391.2L911.1 392.7L909.1 393.5L907.1 394.3L905.6 395.9L903.2 398.2L901.5 401.2L900.3 403.5L898.5 405L896.2 404.1L894.4 405.2L892.4 405.4L890.3 405.3L887.7 405.7L885.1 406.4L883.9 404.7L882.1 401.2L881.7 399L880.4 397.1L879.5 395.3L878.6 393.5L877.4 390.6L876.3 390L877.4 388.8L876.8 386.5L877.4 383L879.8 381.8L883.3 380.6L883.9 378.3L885.1 374.8L885.6 371.3L887.2 369.8L887.4 367.7L886.8 364.2L886.1 362.2Z"/>
<path d="M608.1 532.6L607.5 535.5L606.3 538.5L604 539.7L601.6 540.2L599.3 541.4L597.5 544.3L596.3 547.3L594 550.2L592.2 553.1L591.1 556.6L589.9 559L591.6 562.5L591.6 564.6L592.2 566.6L593 568.6L593.4 570.7L594.6 574.2L596.8 574.3L598.7 573.1L601.4 573.5L604 573.1L606.5 574.1L609.2 574.2L611.9 574.7L613.9 576.6L615.7 578.4L618 579.5L619.9 581.1L621.5 583L623.5 584.3L624.5 586.5L626.8 588.9L627.5 586.9L627.4 584.8L626.8 581.3L627 578.9L627.4 576.6L626.8 574.3L626.8 571.9L627.8 569.6L627.4 567.2L628 563.7L626.2 560.2L624.5 557.2L622.1 556.1L621.5 554.3L623.1 552.9L625.1 552.5L627.2 552L629.2 551.4L631.5 549.6L633.3 547.3L633.3 545L633.3 542.6L631.5 542L629.2 540.8L626.8 539.1L623.9 539.7L621 538.5L618.6 536.7L615.1 536.1L611.6 534.4Z"/>
<path d="M525.4 594.2L526.9 596.4L529.1 597.8L528.4 600.7L526.9 603.7L525.9 605.6L524 606.6L522 607.4L520.3 608.8L517.4 610.3L515.2 611.7L513.7 609.5L515.2 605.9L517.4 602.9L519.6 602.4L521.1 600.7L524.7 599.3L524.7 596.4Z"/>
<path d="M510.8 615.4L514.5 614.7L515.9 618.3L515.7 621.3L515.2 624.2L514.3 627.1L513.7 630L512.8 632.1L512.3 634.4L510.5 635.5L509.3 637.3L507.2 638.3L504.9 638.8L502 640.3L499.8 642.5L497.6 643.2L494 642L497.6 640.3L500.6 638.1L502.8 635.2L504 632.7L504.2 630L505 627.7L506.4 625.6L507.3 623.5L507.9 621.2L509.3 617.6Z"/>
<path d="M465.9 647.2L465.6 649.2L464.8 651.2L463.6 652.9L462 654.1L460.1 654.9L458.1 655.2L456.1 654.9L454.2 654.1L452.6 652.9L451.4 651.2L450.6 649.2L450.3 647.2L450.6 645.1L451.4 643.1L452.6 641.5L454.2 640.2L456.1 639.4L457.8 638.5L461 640.3L464.2 638.2L463.6 641.5L464.8 643.1L465.6 645.1Z"/>
<path d="M608.1 532.6L607.5 535.5L606.3 538.5L604 539.7L601.6 540.2L599.3 541.4L597.5 544.3L596.3 547.3L594 550.2L592.2 553.1L591.1 556.6L589.9 559L591.6 562.5L591.6 564.6L592.2 566.6L593 568.6L593.4 570.7L594.6 574.2L596.8 574.3L598.7 573.1L601.4 573.5L604 573.1L606.5 574.1L609.2 574.2L611.9 574.7L613.9 576.6L615.7 578.4L618 579.5L619.9 581.1L621.5 583L623.5 584.3L624.5 586.5L626.8 588.9L627.5 586.9L627.4 584.8L626.8 581.3L627 578.9L627.4 576.6L626.8 574.3L626.8 571.9L627.8 569.6L627.4 567.2L628 563.7L626.2 560.2L624.5 557.2L622.1 556.1L621.5 554.3L623.1 552.9L625.1 552.5L627.2 552L629.2 551.4L631.5 549.6L633.3 547.3L633.3 545L633.3 542.6L631.5 542L629.2 540.8L626.8 539.1L623.9 539.7L621 538.5L618.6 536.7L615.1 536.1L611.6 534.4Z"/>
<path d="M525.4 594.2L526.9 596.4L529.1 597.8L528.4 600.7L526.9 603.7L525.9 605.6L524 606.6L522 607.4L520.3 608.8L517.4 610.3L515.2 611.7L513.7 609.5L515.2 605.9L517.4 602.9L519.6 602.4L521.1 600.7L524.7 599.3L524.7 596.4Z"/>
<path d="M510.8 615.4L514.5 614.7L515.9 618.3L515.7 621.3L515.2 624.2L514.3 627.1L513.7 630L512.8 632.1L512.3 634.4L510.5 635.5L509.3 637.3L507.2 638.3L504.9 638.8L502 640.3L499.8 642.5L497.6 643.2L494 642L497.6 640.3L500.6 638.1L502.8 635.2L504 632.7L504.2 630L505 627.7L506.4 625.6L507.3 623.5L507.9 621.2L509.3 617.6Z"/>
<path d="M465.9 647.2L465.6 649.2L464.8 651.2L463.6 652.9L462 654.1L460.1 654.9L458.1 655.2L456.1 654.9L454.2 654.1L452.6 652.9L451.4 651.2L450.6 649.2L450.3 647.2L450.6 645.1L451.4 643.1L452.6 641.5L454.2 640.2L456.1 639.4L457.8 638.5L461 640.3L464.2 638.2L463.6 641.5L464.8 643.1L465.6 645.1Z"/>
</g>
<g fill="#a0b444" stroke="rgba(90,95,60,.4)" stroke-width=".5">
<path d="M803.1 341.2L802 343.4L802.5 345.9L803.2 348.2L803.1 350.6L802.5 354.1L805.4 355.3L807.8 357.1L807.6 359.2L807.2 361.2L806.9 363.5L807.2 365.9L806 369.4L804.2 372.3L807.2 373.5L810.1 374.7L812.5 377L814.8 379.9L816 382.9L818.3 385.2L820.7 386.4L822.8 387.4L824.2 389.3L827.1 391.1L827.8 393.2L828.9 395.2L829.2 397.5L830.6 399.3L833.6 399.9L837.1 398.7L840 397.5L842.2 398.8L843.7 400.6L844 402.9L842.8 406.4L840.5 409.3L838.1 412.3L835.2 411.7L832.8 412.9L831.1 410.5L829 409.4L827 408.2L825.2 407.1L823.5 405.8L821 405.8L818.9 404.5L816 402.2L813.6 401L811.9 403.4L810.7 406.9L809.5 409.8L806.6 411L803.1 409.8L799.6 411.6L797.2 409.8L794.3 409.8L791.4 411.6L788.4 413.3L785.5 415.1L783.2 417.4L779.6 418L777.3 415.7L775.7 414L773.8 412.7L772.5 410.7L770.3 409.8L766.7 409.2L765 409.2L762.6 407.5L761.8 404.5L762.6 401L764.4 398.1L767.3 398.1L768.5 395.8L767.7 392.2L769.1 389.3L770.7 388L772.6 387L773.8 384L773.2 381.1L772.6 377.6L772 374.1L771.4 372.3L773.8 372.5L776.1 373.5L779.6 375.2L783.2 375.8L786.7 375.2L787.9 373.5L789 371.7L788.4 369.4L786.7 367L786.1 363.5L786.7 361.2L787.9 359L788.4 356.5L789.6 354.7L790.8 353L793.1 350L795.5 347.1L797.2 344.8L799.6 342.4Z"/>
<path d="M659 453.2L661.2 452.9L663.2 453.8L665.7 453.4L667.8 452L671.4 452.6L673.3 450.4L675.5 448.5L677.3 446.9L679.6 446.1L681.9 448.5L685.4 447.3L688.9 446.1L692.5 445.5L694.5 446.3L696.6 446.1L698.7 446.6L700.7 447.3L703.1 448.3L705.3 449.7L707.5 449.8L709.2 451.3L711.2 452L713.7 452.1L715.9 453.2L717.1 455.5L715.1 456.3L713.6 457.9L711.7 459.3L709.5 460.2L708.3 462L711.2 460.8L713.1 458.7L715.9 457.9L717.9 456.9L720 456.1L722.3 455.5L724.7 455.4L727 454.9L729 454.3L731.1 454.3L731.5 456.3L731.7 458.4L732.3 460.8L732.9 463.1L734.6 465.2L735.2 467.8L735.7 470.5L737.6 472.5L737.3 474.9L737.6 477.2L737 480.1L734.1 479.5L731.1 479L728.2 479.3L726.4 480.3L724.7 481.3L721.2 483.1L720 484.8L717.5 486.4L714.7 487.2L711.7 487.3L708.9 488.3L706.3 488.1L704.2 486.6L701.3 486.3L698.9 484.8L700.1 481.3L701.1 479.3L701.8 477.2L699.5 476L696 477.8L692.5 479L690.1 479.6L687.8 479L686 477.2L683.1 479.5L681.2 480.5L679.6 481.9L678.4 479.5L676 477.4L674.3 479L673.1 482.5L671.4 483.1L669.6 481L667.8 479L665.9 477.6L664.9 475.4L664.4 473.2L665.5 471.3L664.9 468.4L662 467.2L660.2 463.7L658.5 462.5L659.7 460.6L659.6 458.4L658.7 455.9Z"/>
<path d="M598.7 488.9L599.6 487L601 485.4L603.4 484.5L605.1 482.5L607.1 483.1L609.2 483.1L611.2 483.9L613.3 484.2L613.9 487.7L612.7 490.7L614.9 492L617.4 492.4L620.3 492L623.3 492.4L625.6 493.4L628 493L630.3 495.4L632.4 496.2L634.4 497.1L637.4 495.4L640.9 496L643.6 495.3L646.2 494.2L648.4 494.5L650.3 495.4L651.1 493.4L652.6 491.8L656.1 492.4L657.8 491.2L659.6 490.1L660.2 487.2L662.8 486.2L665.5 486L667.7 484.6L670.2 483.6L673.1 483.1L675.2 482.6L677.2 483.6L679.6 482.5L679.3 484.6L679 486.6L679.7 489.2L680.7 491.8L677.2 492.4L675.5 496L672.5 498.3L673.7 501.2L675.5 503L672.5 505.3L671.4 508.8L670.2 511.2L668.4 512.3L666.2 511.9L664.3 512.4L663.1 514.3L660.9 515.2L659.6 517.1L657.8 518.4L657 520.7L654.9 521.7L653.4 523.1L652.6 525L653.9 527.2L653.8 529.7L653.2 533.2L651.4 535.6L649.7 536.7L648.5 535L647.3 533L644.4 533.8L642.1 536.2L639.7 539.1L638 540.3L636.2 541.4L633.3 542.6L631.5 542L629.2 540.8L626.8 539.1L623.9 539.7L621 538.5L618.6 536.7L615.1 536.2L611.6 534.4L608.1 532.6L605.7 533.8L603.4 532.1L602.5 529.6L600.4 528L599.4 526.2L597.7 525L596.3 521.7L598.1 518.2L597.5 514.7L599.3 511.2L601.3 510.3L602.2 508.3L604.1 507.3L605.1 505.3L605.7 503L606.1 500.7L607.5 498.9L606.3 495.4L602.8 494.8L600.4 492.4Z"/>
<path d="M670.2 511.2L673.1 512.9L675.5 515.3L677.6 516.1L679.6 517L681.8 517.6L683.1 519.4L684.7 520.8L686.6 521.7L688.9 524.1L692.5 525L693.6 526.2L695.4 528.5L697.1 532L696.6 535.5L695.3 537.2L694.2 539.1L694.8 542.6L694.3 544.6L694.2 546.7L696 549.6L695.4 552.5L696.6 554.9L698.3 557.8L700.1 561.3L701.8 564.3L698.9 565.4L696 566.6L694.8 569.5L692.5 572.5L690.6 571.8L688.9 570.7L686.7 571.9L684.2 571.9L681.3 570.1L681.9 568.4L679.6 567.2L677.2 564.9L676.1 563.1L674.9 561.3L673.1 557.8L671.9 554.9L670.2 552.5L666.7 553.1L663.2 554.9L659.6 556.6L658.5 554.9L659.6 553.1L660.8 550.2L659.6 547.3L657.9 544.3L656.1 541.4L653.8 538.5L651.4 535.5L653.2 533.2L653.8 529.7L653.9 527.2L652.6 525L653.4 523.1L654.9 521.7L656.5 520.2L658.5 519L659.6 517L661.7 516L662.6 513.7L664.3 512.3L666.4 512.6L668.3 511.8Z"/>
<path d="M598.7 488.9L599.6 487L601 485.4L603.4 484.5L605.1 482.5L607.1 483.1L609.2 483.1L611.2 483.9L613.3 484.2L613.9 487.7L612.7 490.7L614.9 492L617.4 492.4L620.3 492L623.3 492.4L625.6 493.4L628 493L630.3 495.4L632.4 496.2L634.4 497.1L637.4 495.4L640.9 496L643.6 495.3L646.2 494.2L648.4 494.5L650.3 495.4L651.1 493.4L652.6 491.8L656.1 492.4L657.8 491.2L659.6 490.1L660.2 487.2L662.8 486.2L665.5 486L667.7 484.6L670.2 483.6L673.1 483.1L675.2 482.6L677.2 483.6L679.6 482.5L679.3 484.6L679 486.6L679.7 489.2L680.7 491.8L677.2 492.4L675.5 496L672.5 498.3L673.7 501.2L675.5 503L672.5 505.3L671.4 508.8L670.2 511.2L668.4 512.3L666.2 511.9L664.3 512.4L663.1 514.3L660.9 515.2L659.6 517.1L657.8 518.4L657 520.7L654.9 521.7L653.4 523.1L652.6 525L653.9 527.2L653.8 529.7L653.2 533.2L651.4 535.6L649.7 536.7L648.5 535L647.3 533L644.4 533.8L642.1 536.2L639.7 539.1L638 540.3L636.2 541.4L633.3 542.6L631.5 542L629.2 540.8L626.8 539.1L623.9 539.7L621 538.5L618.6 536.7L615.1 536.2L611.6 534.4L608.1 532.6L605.7 533.8L603.4 532.1L602.5 529.6L600.4 528L599.4 526.2L597.7 525L596.3 521.7L598.1 518.2L597.5 514.7L599.3 511.2L601.3 510.3L602.2 508.3L604.1 507.3L605.1 505.3L605.7 503L606.1 500.7L607.5 498.9L606.3 495.4L602.8 494.8L600.4 492.4Z"/>
<path d="M670.2 511.2L673.1 512.9L675.5 515.3L677.6 516.1L679.6 517L681.8 517.6L683.1 519.4L684.7 520.8L686.6 521.7L688.9 524.1L692.5 525L693.6 526.2L695.4 528.5L697.1 532L696.6 535.5L695.3 537.2L694.2 539.1L694.8 542.6L694.3 544.6L694.2 546.7L696 549.6L695.4 552.5L696.6 554.9L698.3 557.8L700.1 561.3L701.8 564.3L698.9 565.4L696 566.6L694.8 569.5L692.5 572.5L690.6 571.8L688.9 570.7L686.7 571.9L684.2 571.9L681.3 570.1L681.9 568.4L679.6 567.2L677.2 564.9L676.1 563.1L674.9 561.3L673.1 557.8L671.9 554.9L670.2 552.5L666.7 553.1L663.2 554.9L659.6 556.6L658.5 554.9L659.6 553.1L660.8 550.2L659.6 547.3L657.9 544.3L656.1 541.4L653.8 538.5L651.4 535.5L653.2 533.2L653.8 529.7L653.9 527.2L652.6 525L653.4 523.1L654.9 521.7L656.5 520.2L658.5 519L659.6 517L661.7 516L662.6 513.7L664.3 512.3L666.4 512.6L668.3 511.8Z"/>
</g>
<g fill="#6b7a2c" stroke="rgba(90,95,60,.4)" stroke-width=".5">
<path d="M600.9 310.2L603.1 308.5L604.4 306.1L607.3 304.3L609.4 303.4L611.6 303.4L613.8 303.8L616.1 304.5L618.5 303.9L620.8 304.3L623.1 303.9L625.5 303.8L628.1 303.1L630.8 302.8L633.3 302.5L635.5 303.8L637.4 302.5L639.6 302.3L641.9 301.8L643.3 300L646 302L648.9 303.8L651.9 303.3L654.8 304.3L657.8 304.4L660.7 304.9L663.2 305.8L665.3 307.3L667.4 306.9L669.3 307.9L671.2 308.4L673.6 308L675.9 309L678 309.3L680 309.8L682.2 310L684.1 311L685.9 312.2L685.3 316.1L682.6 317L680 318.4L678 319L675.9 319.6L672.4 320.2L670.6 321.3L668.9 322.5L665.3 323.7L662.9 324.4L660.7 325.4L657.1 326.6L655 327.9L652.5 327.8L648.9 327.2L647.5 329.1L645.4 330.1L641.9 328.4L638.4 326.6L634.9 327.2L631.4 327.8L627.8 328.4L624.3 330.1L622 331.9L619.6 332.5L617.3 331.9L613.8 333.1L611.4 330.7L607.9 329L607.3 326.6L609.7 324.9L611.4 322.5L609.1 321.9L606.7 322.5L604.9 320.5L604.4 317.8L602.6 314.3L602.1 312.1Z"/>
<path d="M730.6 322.3L732.8 321.7L734.9 320.8L737 322.7L736.5 325.6L738.7 326.6L741 327.4L743.8 326.9L746.3 325.6L749.9 326L749.4 329.1L751 330.4L753 330.9L755 331.4L757.1 332.4L759.2 333.3L759.8 336.6L758.3 340.3L756.9 342.4L754.8 343.6L752.9 346L755 348.3L754.1 350.6L752.1 351.1L750.1 350.6L746.6 349L744.7 346L741.9 346.7L740.5 345.1L739.2 343.4L738 341.4L736 340.1L733.7 339.7L732.2 338L730.6 335.6L728.6 335.6L726.3 333.6L727.8 331.7L730.4 330.9L732.2 331.9L733.9 332.8L735.1 330.7L732.5 329.3L730.6 326Z"/>
<path d="M633.3 542.6L636.2 541.4L638 540.3L639.7 539.1L642.1 536.1L644.4 533.8L647.3 533L648.5 535L649.7 536.7L651.4 535.5L653.8 538.5L656.1 541.4L657.9 544.3L659.6 547.3L660.8 550.2L659.6 553.1L658.5 554.9L659.6 556.6L663.2 554.9L666.7 553.1L670.2 552.5L671.9 554.9L673.1 557.8L674.9 561.3L676.1 563.1L677.2 564.9L679.6 567.2L681.9 568.4L681.3 570.1L679.6 572.5L677.2 574.2L674.9 574.8L673.1 577.2L670.2 579.5L667.3 581.3L664.3 583L662 581.3L659.6 581.8L657.3 582.4L656.1 580.1L654.4 581.3L653.8 584.2L651.4 583.6L649.1 584.2L645.6 585.4L642.1 586.5L639.7 587.1L636.2 586.5L632.7 586L629.2 585.4L627.4 584.8L626.8 581.3L627 578.9L627.4 576.6L626.8 574.3L626.8 571.9L627.8 569.6L627.4 567.2L628 563.7L626.2 560.2L624.5 557.2L622.1 556.1L621.5 554.3L623.1 552.9L625.1 552.5L627.2 552L629.2 551.4L631.5 549.6L633.3 547.3L633.3 545Z"/>
<path d="M633.3 542.6L636.2 541.4L638 540.3L639.7 539.1L642.1 536.1L644.4 533.8L647.3 533L648.5 535L649.7 536.7L651.4 535.5L653.8 538.5L656.1 541.4L657.9 544.3L659.6 547.3L660.8 550.2L659.6 553.1L658.5 554.9L659.6 556.6L663.2 554.9L666.7 553.1L670.2 552.5L671.9 554.9L673.1 557.8L674.9 561.3L676.1 563.1L677.2 564.9L679.6 567.2L681.9 568.4L681.3 570.1L679.6 572.5L677.2 574.2L674.9 574.8L673.1 577.2L670.2 579.5L667.3 581.3L664.3 583L662 581.3L659.6 581.8L657.3 582.4L656.1 580.1L654.4 581.3L653.8 584.2L651.4 583.6L649.1 584.2L645.6 585.4L642.1 586.5L639.7 587.1L636.2 586.5L632.7 586L629.2 585.4L627.4 584.8L626.8 581.3L627 578.9L627.4 576.6L626.8 574.3L626.8 571.9L627.8 569.6L627.4 567.2L628 563.7L626.2 560.2L624.5 557.2L622.1 556.1L621.5 554.3L623.1 552.9L625.1 552.5L627.2 552L629.2 551.4L631.5 549.6L633.3 547.3L633.3 545Z"/>
</g>
<g fill="#434c1d" stroke="rgba(90,95,60,.4)" stroke-width=".5">
<path d="M685.9 312.2L688.9 312.3L691.7 311.4L693.7 310.9L695.4 309.6L697.6 309.8L700.6 309.6L703.4 308.4L705.3 307.5L707.5 308L709.3 307L710.7 309L713.3 308.5L715.2 306.7L717.5 306.3L719.4 307.1L721 308.4L721.6 310.2L724.2 310.8L726.9 311.4L730.4 313.1L732.7 313.7L735 312.5L736.3 310.2L739.3 310.5L742.1 309.4L745.6 310.2L748 311L750.3 312L752.5 313.3L753.8 315.5L752.7 319L751.5 322.5L749.9 326L746.3 325.6L743.8 326.9L741 327.4L738.7 326.6L736.5 325.6L737 322.7L734.9 320.8L732.8 321.7L730.6 322.3L729.2 321.3L725.7 320.8L723.6 321.6L721.6 322.7L718.7 322.5L716.3 322.8L714 321.9L711.6 323.7L710.1 325.1L708.7 326.6L706.6 327.3L705.2 329L703.4 331.3L704.6 333.1L706.4 331.3L708.7 331.9L708.3 334.2L708.7 336.6L705.2 338.3L703.1 338.5L701.1 338.9L699.6 337.3L697.6 336.6L695.8 334.8L695.2 331.3L692.3 329.5L690.5 327.8L688 327.9L685.9 326.6L682.9 326.6L680 327.4L678.7 325.6L676.5 324.9L675.6 323L675.5 320.8L676.5 319.6L680 318.4L682.6 317L685.3 316.1Z"/>
<path d="M774.4 316.6L777.3 315.2L780.8 316.6L783.2 316.1L784.8 317.4L786.9 317.8L787.3 321.3L786.2 323L785.5 324.9L786.1 326.6L788 325.6L789.6 324.3L790.8 326.6L793.5 327.1L796 328.4L797.9 329.2L800 329.5L801.9 330.1L804.6 330.1L807.2 330.9L807.8 332.1L805.4 334.2L804.2 337.7L803.1 341.3L799.6 342.4L797.2 344.8L795.5 347.1L793.1 350.1L790.8 353L789.6 354.7L788.4 356.5L787.9 359L786.7 361.2L786.1 363.5L786.7 367.1L788.4 369.4L789 371.7L787.7 373.4L786.7 375.3L783.2 375.8L779.6 375.3L776.1 373.5L773.8 372.5L771.4 372.3L770.3 370L772 368.2L773.8 366.5L776.7 364.7L773.8 362.9L771.6 362L770.3 360L769 358L766.7 357.1L764.5 355.5L762.1 354.2L759.8 352.8L757.4 351.8L754.1 350.6L755 348.3L752.9 346L754.8 343.6L756.9 342.4L758.3 340.3L759.8 336.6L759.2 333.3L760.9 332.5L762.9 331.8L765 331.3L766.2 328.4L767.9 324.9L769.7 323.5L770.3 321.3L772.6 319Z"/>
</g>
<g fill="#181c14" stroke="rgba(90,95,60,.4)" stroke-width=".5">
<path d="M753.8 315.5L756.7 316.5L759.7 316.1L761.5 315.1L763.6 315L765.6 314.9L768.4 314.7L770.8 313.1L773.8 312.2L775.5 314.3L774.4 316.6L772.6 319L770.3 321.3L769.7 323.5L767.9 324.9L766.2 328.4L765 331.3L762.9 331.8L760.9 332.5L759.2 333.3L757.1 332.4L755 331.4L753 330.9L751 330.4L749.4 329.1L749.9 326L751.5 322.5L752.7 319Z"/>
<path d="M731.6 345.4L734 345.9L736.3 345L739.2 343.4L740.5 345.1L741.9 346.7L744.7 346L746.6 349L750.1 350.6L752.1 351.1L754.1 350.6L757.4 351.8L759.8 352.8L762.1 354.2L764.5 355.5L766.7 357.1L769 358L770.3 360L771.6 362L773.8 362.9L776.7 364.7L773.8 366.5L772 368.2L770.3 370L771.4 372.3L772 374.1L772.6 377.6L773.2 381.1L773.8 384L772.6 387L770.7 388L769.1 389.3L767.7 392.3L768.5 395.8L767.3 398.1L764.4 398.1L762.6 401L761.8 404.6L762.6 407.5L765 409.2L765.6 411.6L764.4 410.4L760.9 411.6L757.4 412.5L753.8 412.2L751.6 411.6L750.3 409.8L748 406.9L744.5 405.1L742.6 404.2L740.4 404L738.6 402.2L735.1 403.4L732.8 402.9L730.4 402.8L728.3 401.2L725.7 400.5L724 397.5L722.2 394L719.3 392.8L717.5 390.3L719.3 389.9L721 387.6L722.2 385.8L723.4 384L725.7 381.1L726.9 377.6L728.6 380.5L730.5 379.4L731.6 377.6L733.7 376.9L735.1 375.3L736.5 373.7L737.4 371.7L736.8 369.4L735 367.8L732.7 367.1L731.6 363.5L732.2 360L732.6 357.6L731.6 355.3L732.2 351.8L732.7 348.3Z"/>
</g>
<g fill="#fff" stroke="#d4d4d4" stroke-width=".6">
<path d="M740.4 339.2L743.9 338L746.1 337.7L748 338.7L750.3 340.7L750.9 343.6L748.6 344.5L745.6 343L742.7 342.7L740.4 341.3Z"/>
</g>
<g stroke="rgba(150,155,130,.4)" stroke-width=".5">
<path d="M741 368.8L742.7 367.6L744.5 369.4L743.3 371.7L745.6 372.1L748 372.3L749.1 370.5L750.3 368.8L752.7 366.4L756.2 365.9L758.5 366.8L760.9 367L761.5 369.1L763.2 370.5L764.4 374.1L767.9 375.8L770.8 375.2"/>
<path d="M667.3 581.3L667.3 584.8L664.3 587.1L660.8 588.3L660.2 591.8L658.9 593.5L657.9 595.3L656 596.4L654.9 598.3L651.4 600L653.8 601.2L657.3 601.2L659 604.7L660.8 608.2L662 608.8"/>
<path d="M732.7 313.7L730.6 315.1L729.2 317.2L726.9 320.2L728.8 321.2L730.4 322.5"/>
<path d="M667.3 581.3L667.3 584.8L664.3 587.1L660.8 588.3L660.2 591.8L658.9 593.5L657.9 595.3L656 596.4L654.9 598.3L651.4 600L653.8 601.2L657.3 601.2L659 604.7L660.8 608.2L662 608.8"/>
<path d="M732.7 313.7L730.6 315.1L729.2 317.2L726.9 320.2L728.8 321.2L730.4 322.5"/>
</g>
</svg>
<!--/MAPSVG-->
<div class="abs" style="left:618px;top:329px;width:238px;height:22px;background:rgba(144,188,233,.09)"></div>
<div class="abs" style="left:650.500px;top:333px;font-size:12px;line-height:15px;letter-spacing:-.14px;color:rgba(90,35,25,.085);white-space:nowrap">Recorte de pantalla completa</div>
<!-- TASKBAR -->

<div id="task" class="abs"></div>
<div class="abs" style="left:680px;top:728px;width:45px;height:40px;background:#414c53"></div>
<div id="search" class="abs"></div>
<div class="abs" style="left:88.500px;top:739px;font-size:14.400px;line-height:18px;color:#1f1f1f;letter-spacing:-.45px;white-space:nowrap">Buscar</div>
<svg class="abs" style="left:0;top:728px" width="1366" height="40" viewBox="0 728 1366 40" fill="none">
<!-- windows logo -->
<path d="M16 742.300l6.700-1v6.500H16zM23.600 741.200l8.600-1.300v7.900h-8.600zM16 748.700h6.700v6.500l-6.700-1zM23.600 748.700h8.600v7.900l-8.600-1.300z" fill="#fff"/>
<!-- search glass -->
<circle cx="71.700" cy="746" r="5.300" stroke="#222" stroke-width="1.300"/><path d="M68 750l-7.500 7.500" stroke="#222" stroke-width="1.300"/>
<!-- globe / arrows / sun -->
<clipPath id="cs"><rect x="48" y="729" width="288" height="39"/></clipPath>
<g clip-path="url(#cs)">
<circle cx="338" cy="748" r="31.500" fill="#f07a1c" stroke="#f07a1c" stroke-width="3" stroke-dasharray="5 2.500"/>
<circle cx="338.500" cy="748" r="29" fill="#f9cb38"/>
<circle cx="275" cy="748" r="13.800" fill="#5fb0ea"/>
<path d="M266 741c3-3 8-4 10-3l-1 4 3 3-2 5-3 1-1 6-3-5-3-4z" fill="#2f7d1c"/>
<path d="M279 738c4 1 7 4 8 7l-3 4-4-2-1-4-3-2z" fill="#4a9a22"/>
<path d="M261.300 748a13.800 13.800 0 0 0 13.700 13.800V734.200A13.800 13.800 0 0 0 261.300 748z" fill="#000" opacity=".18"/>
<path d="M275 731v36" stroke="#f07a6a" stroke-width="1.200"/>
<path d="M261.300 749c4 4 23 4 27.500-1" stroke="#f07a6a" stroke-width="1.200"/>
<g stroke="#8ea5bf" stroke-width="1.600" fill="#8ea5bf"><path d="M303 737h-9M303 748h-9M303 759h-9"/><path d="M291 737l4-2.600v5.200zM291 748l4-2.600v5.200zM291 759l4-2.600v5.200z" stroke="none"/></g>
</g>
<!-- cortana -->
<circle cx="360" cy="748" r="6.800" stroke="#fff" stroke-width="1.900"/>
<!-- task view -->
<path d="M400.500 740.500h2v1.600h9v-1.600h2M400.500 754.500h2v-1.600h9v1.600h2M402.500 744.500h9v6h-9z" stroke="#fff" stroke-width="1.200"/>
<path d="M415.500 740v3M415.500 748.500v6" stroke="#fff" stroke-width="1.200"/><rect x="414.300" y="744.300" width="2.700" height="2.700" fill="#fff"/>
<!-- snipping -->
<ellipse cx="457" cy="745" rx="10.500" ry="7.500" transform="rotate(-22 457 745)" fill="#f4f4f4" stroke="#d22b2b" stroke-width="1.600"/>
<path d="M448 752c4 2.500 9 2.500 13-.5" stroke="#9aa0a6" stroke-width="2.400"/>
<path d="M455 738l7 14M463 739l-5 13" stroke="#555" stroke-width="1.200"/>
<circle cx="463" cy="755" r="2.300" stroke="#2a8fd8" stroke-width="1.500"/><circle cx="468" cy="751.500" r="2.300" stroke="#2a8fd8" stroke-width="1.500"/>
<!-- edge -->
<circle cx="508" cy="748" r="12" fill="#1c74c8"/>
<path d="M496.200 746a12 12 0 0 1 23.600-.5c.4 4-2.500 6.500-6.300 6.500h-4c1.800-1 2.600-2.600 2.300-4.400-.5-2.500-3-4-5.800-3.600-4 .6-7.300 3.500-9.800 2z" fill="#4fd06a"/>
<path d="M496.200 746c2-3.500 6.500-5 10-4.200 3 .8 5 3 5.300 5.800-1.300-1.800-3.700-2.500-6-1.800-2.800 1-4 3.800-3.200 6.800.9 3.300 4.200 6 8.700 6.800a12 12 0 0 1-14.800-13.400z" fill="#1057a8"/>
<path d="M519.800 745.500c.4 4-2.500 6.500-6.300 6.500h-4c1.800-1 2.600-2.600 2.300-4.400.9 1.500 3.500 2.200 5.400 1.100 1.300-.7 2.200-1.800 2.600-3.200z" fill="#35c1f1"/>
<!-- red app -->
<rect x="545" y="736" width="24" height="24" rx="2.500" fill="#d6361c" stroke="#f3b5a8" stroke-width=".8"/>
<circle cx="557" cy="748" r="7" stroke="#fff" stroke-width="1.900"/><path d="M557 743.800v8.400" stroke="#fff" stroke-width="2"/>
<!-- firefox -->
<circle cx="605.500" cy="749.500" r="10.800" fill="#ff7a1a"/>
<path d="M596 743c1-3 3-4.500 3-4.500s.2 2 1.500 3c2-3.500 6-5.500 7.500-5.500-1 1.500-.5 3 .5 4 3 1 6.500 4 7.500 8.500.8 5-2.500 10.300-8 11.600 4-2 5.500-6 4.500-9.500-1-3.500-4-5.600-7.500-5.600-3 0-5 1-6.500 2.500z" fill="#ffbd2e"/>
<circle cx="605" cy="750" r="5.600" fill="#7b3fe4"/>
<path d="M599.500 750.500c2 .8 4-.2 5.200-1.500 1.200-1.300 3-1.500 4.300-.8-1-2-3-3-5.200-2.700-2.500.4-4.300 2.400-4.300 5z" fill="#ff5a36"/>
<!-- explorer -->
<path d="M643 739.500h8l2 2.200h13.500v3H643z" fill="#e8a317"/>
<rect x="643" y="742.500" width="23.500" height="15.500" rx="1" fill="#ffd766"/>
<path d="M648.500 758v-6.500h12.500V758h-3.500v-3.500h-5.500V758z" fill="#2d8ad8"/>
<!-- chrome -->
<circle cx="704" cy="748" r="12" fill="#fff"/>
<path d="M704 736a12 12 0 0 1 10.400 6H704a6 6 0 0 0-5.200 3l-5.200-3A12 12 0 0 1 704 736z" fill="#ea4335"/>
<path d="M693.600 742l5.200 9a6 6 0 0 0 5.200 3l-2.700 5.700A12 12 0 0 1 693.600 742z" fill="#34a853"/>
<path d="M714.400 742a12 12 0 0 1-13.100 17.700L706.500 751a6 6 0 0 0 2.700-9z" fill="#fbbc04"/>
<circle cx="704" cy="748" r="5.400" fill="#fff"/><circle cx="704" cy="748" r="4.300" fill="#4285f4"/>
<!-- underlines -->
<rect x="488" y="766" width="40" height="2" fill="#76b9ed"/><rect x="635.500" y="766" width="40" height="2" fill="#76b9ed"/><rect x="680" y="766" width="45" height="2" fill="#76b9ed"/>
<!-- weather -->
<linearGradient id="wg" x1="0" y1="0" x2="1" y2="1"><stop offset="0" stop-color="#fbc02d"/><stop offset="1" stop-color="#f07f1a"/></linearGradient><circle cx="996" cy="748" r="10" fill="url(#wg)"/>
<path d="M996.500 753.500a3 3 0 0 1 .6-5.900 4.200 4.200 0 0 1 7.800-.6 3.300 3.300 0 0 1 .6 6.500z" fill="#dfe9f7"/>
<!-- tray -->
<path d="M1177 751l6-6 6 6" stroke="#fff" stroke-width="1.300"/>
<rect x="1202" y="743" width="8" height="10" rx="2" stroke="#fff" stroke-width="1.100"/><path d="M1210 746.500l3-1.800v6.600l-3-1.800M1203 740.500c2-1.300 4.500-1.300 6.500 0M1203 755.500c2 1.300 4.500 1.300 6.500 0" stroke="#fff" stroke-width="1.100"/>
<path d="M1223 745.500h2.700l3.600-3.500v12l-3.600-3.500H1223z" stroke="#fff" stroke-width="1.100" stroke-linejoin="round"/>
<path d="M1232 745.300a4 4 0 0 1 0 5.400M1234.300 743a7.200 7.200 0 0 1 0 10M1236.600 740.800a10.300 10.300 0 0 1 0 14.400" stroke="#fff" stroke-width="1.100"/>
<!-- notifications -->
<path d="M1326 740.500h14v11h-10l-4 3.500z" fill="#fff"/><path d="M1328.500 743.500h9M1328.500 746h9M1328.500 748.500h6" stroke="#1f2b33" stroke-width="1"/>
<circle cx="1340.500" cy="755" r="6.700" fill="#1f2b33" stroke="#b9bfc4" stroke-width="1.200"/>
<path d="M1361.500 728v40" stroke="#7d868c" stroke-width="1"/>
</svg>
<div class="abs tk" style="left:1016.500px;top:740px;font-size:14px;line-height:18px;letter-spacing:-.8px">10°C</div>
<div class="abs tk" style="left:1054.500px;top:740px;font-size:14px;line-height:18px;letter-spacing:-.12px">Mayorm. soleado</div>
<div class="abs tk" style="left:1264.500px;top:732px;line-height:15px;letter-spacing:-.6px">11:20</div>
<div class="abs tk" style="left:1249px;top:749px;line-height:15px;letter-spacing:-.2px">20/03/2023</div>
<div class="abs tk" style="left:1338px;top:749px;font-size:10px;line-height:12px;font-weight:bold">1</div>
</body>
</html>
